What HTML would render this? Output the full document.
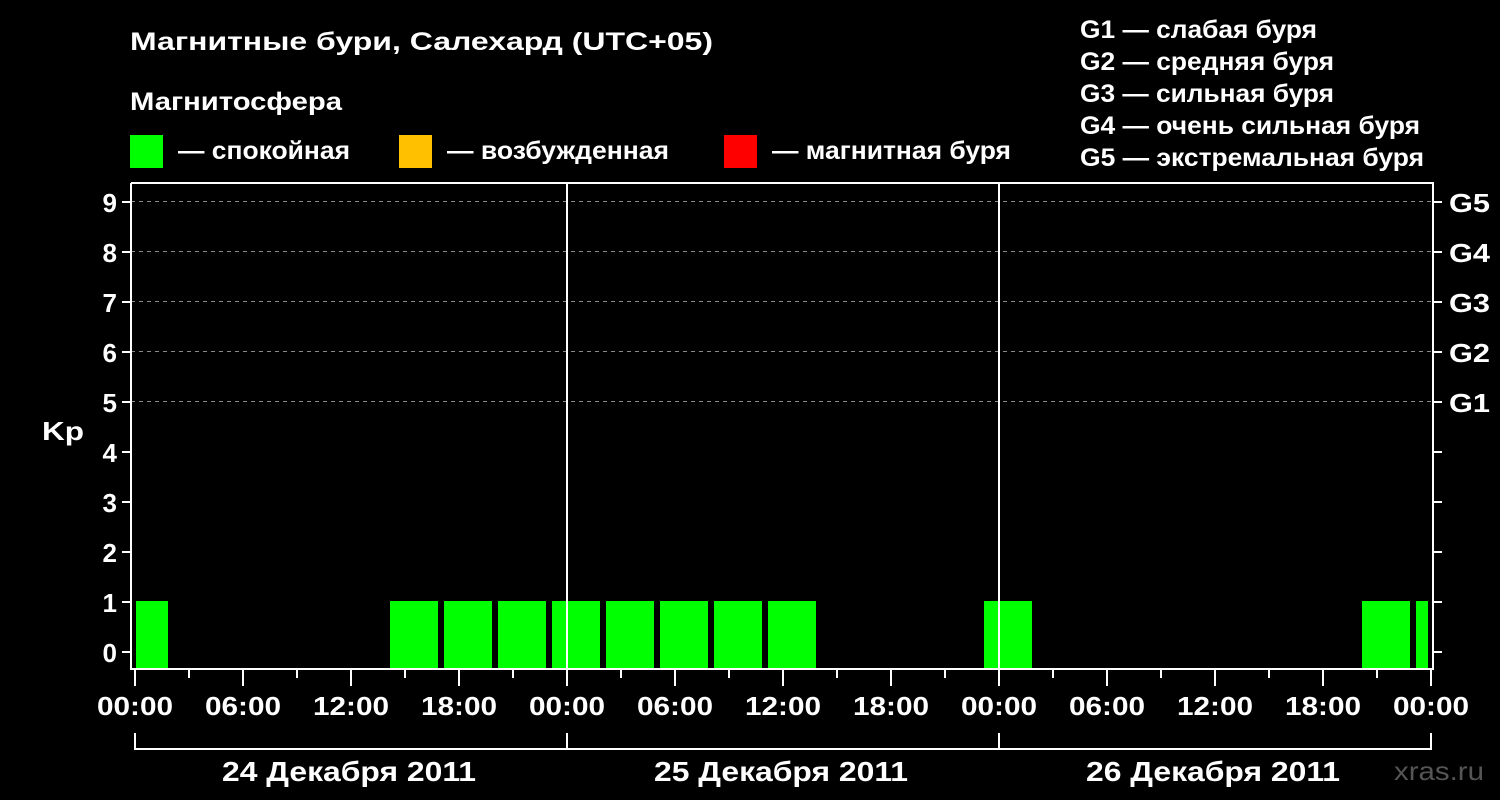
<!DOCTYPE html>
<html><head><meta charset="utf-8"><style>
html,body{margin:0;padding:0;background:#000;}
svg{display:block;font-family:"Liberation Sans",Arial,sans-serif;font-weight:bold;}
</style></head><body>
<svg width="1500" height="800" xmlns="http://www.w3.org/2000/svg">
<rect width="1500" height="800" fill="#000"/>
<g fill="#fff" font-size="25">
<text x="130" y="50" textLength="583" lengthAdjust="spacingAndGlyphs">Магнитные бури, Салехард (UTC+05)</text>
<text x="130" y="110" textLength="212" lengthAdjust="spacingAndGlyphs">Магнитосфера</text>
<text x="178" y="159" textLength="172" lengthAdjust="spacingAndGlyphs">— спокойная</text>
<text x="447" y="159" textLength="222" lengthAdjust="spacingAndGlyphs">— возбужденная</text>
<text x="772" y="159" textLength="239" lengthAdjust="spacingAndGlyphs">— магнитная буря</text>
<text x="1080" y="38" textLength="237" lengthAdjust="spacingAndGlyphs">G1 — слабая буря</text>
<text x="1080" y="70" textLength="254" lengthAdjust="spacingAndGlyphs">G2 — средняя буря</text>
<text x="1080" y="102" textLength="254" lengthAdjust="spacingAndGlyphs">G3 — сильная буря</text>
<text x="1080" y="134" textLength="340" lengthAdjust="spacingAndGlyphs">G4 — очень сильная буря</text>
<text x="1080" y="166" textLength="344" lengthAdjust="spacingAndGlyphs">G5 — экстремальная буря</text>
</g>
<rect x="130" y="135" width="33" height="33" fill="#00ff00"/>
<rect x="399" y="135" width="33" height="33" fill="#ffc000"/>
<rect x="724" y="135" width="33" height="33" fill="#ff0000"/>
<g stroke="#888" stroke-dasharray="4,4" stroke-width="1">
<line x1="131" x2="1433" y1="201.5" y2="201.5"/>
<line x1="131" x2="1433" y1="251.5" y2="251.5"/>
<line x1="131" x2="1433" y1="301.5" y2="301.5"/>
<line x1="131" x2="1433" y1="351.5" y2="351.5"/>
<line x1="131" x2="1433" y1="401.5" y2="401.5"/>
</g>
<g fill="#00ff00">
<rect x="136" y="601" width="32" height="67"/>
<rect x="390" y="601" width="48" height="67"/>
<rect x="444" y="601" width="48" height="67"/>
<rect x="498" y="601" width="48" height="67"/>
<rect x="552" y="601" width="48" height="67"/>
<rect x="606" y="601" width="48" height="67"/>
<rect x="660" y="601" width="48" height="67"/>
<rect x="714" y="601" width="48" height="67"/>
<rect x="768" y="601" width="48" height="67"/>
<rect x="984" y="601" width="48" height="67"/>
<rect x="1362" y="601" width="48" height="67"/>
<rect x="1416" y="601" width="12" height="67"/>
</g>
<g stroke="#fff" stroke-width="2" fill="none">
<line x1="567" x2="567" y1="183" y2="668"/>
<line x1="999" x2="999" y1="183" y2="668"/>
<polyline points="131,183 1433,183 1433,669 131,669 131,183"/>
<path d="M122 652H131M122 602H131M122 552H131M122 502H131M122 452H131M122 402H131M122 352H131M122 302H131M122 252H131M122 202H131"/>
<path d="M1433 652H1442M1433 602H1442M1433 552H1442M1433 502H1442M1433 452H1442M1433 402H1442M1433 352H1442M1433 302H1442M1433 252H1442M1433 202H1442"/>
<path d="M135 669V686M243 669V686M351 669V686M459 669V686M567 669V686M675 669V686M783 669V686M891 669V686M999 669V686M1107 669V686M1215 669V686M1323 669V686M1431 669V686"/>
<path d="M189 669V678M297 669V678M405 669V678M513 669V678M621 669V678M729 669V678M837 669V678M945 669V678M1053 669V678M1161 669V678M1269 669V678M1377 669V678"/>
<path d="M135 733V750M567 733V750M999 733V750M1431 733V750M135 749H1431"/>
</g>
<g fill="#fff" font-size="26" text-anchor="end">
<text x="117" y="662">0</text><text x="117" y="612">1</text><text x="117" y="562">2</text>
<text x="117" y="512">3</text><text x="117" y="462">4</text><text x="117" y="412">5</text>
<text x="117" y="362">6</text><text x="117" y="312">7</text><text x="117" y="262">8</text>
<text x="117" y="212">9</text>
</g>
<text x="42" y="440" fill="#fff" font-size="26" textLength="42" lengthAdjust="spacingAndGlyphs">Kp</text>
<g fill="#fff" font-size="26">
<text x="1449" y="212" textLength="41" lengthAdjust="spacingAndGlyphs">G5</text>
<text x="1449" y="262" textLength="41" lengthAdjust="spacingAndGlyphs">G4</text>
<text x="1449" y="312" textLength="41" lengthAdjust="spacingAndGlyphs">G3</text>
<text x="1449" y="362" textLength="41" lengthAdjust="spacingAndGlyphs">G2</text>
<text x="1449" y="412" textLength="41" lengthAdjust="spacingAndGlyphs">G1</text>
</g>
<g fill="#fff" font-size="26">
<text x="97" y="715" textLength="76" lengthAdjust="spacingAndGlyphs">00:00</text>
<text x="205" y="715" textLength="76" lengthAdjust="spacingAndGlyphs">06:00</text>
<text x="313" y="715" textLength="76" lengthAdjust="spacingAndGlyphs">12:00</text>
<text x="421" y="715" textLength="76" lengthAdjust="spacingAndGlyphs">18:00</text>
<text x="529" y="715" textLength="76" lengthAdjust="spacingAndGlyphs">00:00</text>
<text x="637" y="715" textLength="76" lengthAdjust="spacingAndGlyphs">06:00</text>
<text x="745" y="715" textLength="76" lengthAdjust="spacingAndGlyphs">12:00</text>
<text x="853" y="715" textLength="76" lengthAdjust="spacingAndGlyphs">18:00</text>
<text x="961" y="715" textLength="76" lengthAdjust="spacingAndGlyphs">00:00</text>
<text x="1069" y="715" textLength="76" lengthAdjust="spacingAndGlyphs">06:00</text>
<text x="1177" y="715" textLength="76" lengthAdjust="spacingAndGlyphs">12:00</text>
<text x="1285" y="715" textLength="76" lengthAdjust="spacingAndGlyphs">18:00</text>
<text x="1393" y="715" textLength="76" lengthAdjust="spacingAndGlyphs">00:00</text>
<text x="222" y="781" font-size="28" textLength="254" lengthAdjust="spacingAndGlyphs">24 Декабря 2011</text>
<text x="654" y="781" font-size="28" textLength="254" lengthAdjust="spacingAndGlyphs">25 Декабря 2011</text>
<text x="1086" y="781" font-size="28" textLength="254" lengthAdjust="spacingAndGlyphs">26 Декабря 2011</text>
</g>
<text x="1394" y="780" fill="#555" font-size="26" font-weight="normal" textLength="90" lengthAdjust="spacingAndGlyphs">xras.ru</text>
</svg>
</body></html>
